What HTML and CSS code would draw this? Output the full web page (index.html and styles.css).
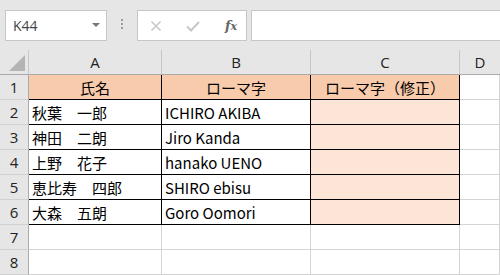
FILE: index.html
```html
<!DOCTYPE html>
<html lang="ja">
<head>
<meta charset="utf-8">
<link rel="stylesheet" href="styles.css">
</head>
<body>
<div class="toolbar">
  <div class="namebox"><span class="ref">K44</span><span class="caret"></span></div>
  <div class="dots"><i></i><i></i><i></i></div>
  <div class="fxbox">
    <svg class="ico" width="14" height="14" viewBox="0 0 14 14"><path d="M2.5 2.5 L11.5 11.5 M11.5 2.5 L2.5 11.5" stroke="#c8c8c8" stroke-width="1.6" fill="none"/></svg>
    <svg class="ico" width="16" height="14" viewBox="0 0 16 14"><path d="M2 7.5 L6 11.5 L14 3" stroke="#c8c8c8" stroke-width="2" fill="none"/></svg>
    <span class="fx">f<span class="x">x</span></span>
  </div>
  <div class="formula"></div>
</div>
<div class="sheet">
  <div class="corner"><span class="tri"></span></div>
  <div class="ch">A</div><div class="ch">B</div><div class="ch">C</div><div class="ch last">D</div>

  <div class="rh">1</div>
  <div class="c hd cen bl">氏名</div><div class="c hd cen bl">ローマ字</div><div class="c hd cen bl">ローマ字（修正）</div><div class="c"></div>

  <div class="rh">2</div>
  <div class="c bl">秋葉　一郎</div><div class="c bl">ICHIRO AKIBA</div><div class="c pk bl"></div><div class="c"></div>

  <div class="rh">3</div>
  <div class="c bl">神田　二朗</div><div class="c bl">Jiro Kanda</div><div class="c pk bl"></div><div class="c"></div>

  <div class="rh">4</div>
  <div class="c bl">上野　花子</div><div class="c bl">hanako UENO</div><div class="c pk bl"></div><div class="c"></div>

  <div class="rh">5</div>
  <div class="c bl">恵比寿　四郎</div><div class="c bl">SHIRO ebisu</div><div class="c pk bl"></div><div class="c"></div>

  <div class="rh">6</div>
  <div class="c bl">大森　五朗</div><div class="c bl">Goro Oomori</div><div class="c pk bl"></div><div class="c"></div>

  <div class="rh">7</div>
  <div class="c"></div><div class="c"></div><div class="c"></div><div class="c"></div>

  <div class="rh">8</div>
  <div class="c"></div><div class="c"></div><div class="c"></div><div class="c"></div>
</div>
</body>
</html>
```
FILE: styles.css
```css
html, body {
  margin: 0;
  padding: 0;
  background: #ffffff;
  width: 500px;
  height: 275px;
  overflow: hidden;
}
body {
  font-family: "Noto Sans CJK JP", "Noto Sans", sans-serif;
  color: #000;
}
.toolbar {
  height: 50px;
  background: #e6e6e6;
  display: flex;
  align-items: flex-start;
  padding-top: 10px;
  box-sizing: border-box;
}
.namebox {
  margin-left: 5px;
  width: 102px;
  height: 31px;
  box-sizing: border-box;
  background: #fff;
  border: 1px solid #c6c6c6;
  display: flex;
  align-items: center;
  justify-content: space-between;
  padding: 0 6px 0 7px;
}
.ref {
  font-family: "Open Sans", "Noto Sans", sans-serif;
  font-size: 14px;
  color: #444;
}
.caret {
  width: 0;
  height: 0;
  border-left: 4px solid transparent;
  border-right: 4px solid transparent;
  border-top: 4px solid #777;
  margin-bottom: 2px;
}
.dots {
  width: 30px;
  display: flex;
  flex-direction: column;
  align-items: center;
  gap: 2px;
  padding-top: 9px;
}
.dots i {
  display: block;
  width: 2px;
  height: 2px;
  background: #9a9a9a;
}
.fxbox {
  width: 110px;
  height: 31px;
  box-sizing: border-box;
  background: #fff;
  border: 1px solid #c6c6c6;
  display: flex;
  align-items: center;
  padding-left: 11px;
  gap: 22px;
}
.fx {
  font-family: "DejaVu Serif", "Liberation Serif", serif;
  font-style: italic;
  font-weight: bold;
  font-size: 13px;
  color: #666;
  margin-left: 2px;
}
.fx .x { font-size: 11px; }
.formula {
  margin-left: 4px;
  flex: 1;
  height: 31px;
  box-sizing: border-box;
  background: #fff;
  border: 1px solid #c6c6c6;
  border-right: none;
}
.sheet {
  display: grid;
  grid-template-columns: 29px 133px 149px 149px 1fr;
  grid-template-rows: 25px repeat(8, 25px);
  font-size: 15px;
}
.corner {
  background: #e6e6e6;
  border-right: 1px solid #c6c6c6;
  border-bottom: 1px solid #ababab;
  position: relative;
}
.tri {
  position: absolute;
  right: 3px;
  bottom: 3px;
  width: 0;
  height: 0;
  border-left: 16px solid transparent;
  border-bottom: 16px solid #b4b4b4;
}
.ch {
  background: #e6e6e6;
  border-right: 1px solid #c6c6c6;
  border-bottom: 1px solid #ababab;
  display: flex;
  align-items: center;
  justify-content: center;
  font-family: "Open Sans", "Noto Sans", sans-serif;
  font-size: 15px;
  color: #222;
}
.ch.last { border-right: none; }
.rh {
  background: #e6e6e6;
  border-right: 1px solid #ababab;
  border-bottom: 1px solid #d0d0d0;
  display: flex;
  align-items: center;
  justify-content: center;
  font-family: "Open Sans", "Noto Sans", sans-serif;
  font-size: 15px;
  color: #222;
}
.c {
  border-right: 1px solid #d4d4d4;
  border-bottom: 1px solid #d4d4d4;
  display: flex;
  align-items: center;
  padding-left: 3px;
  white-space: nowrap;
  overflow: hidden;
  line-height: 1;
}
.c.bl {
  border-right-color: #000;
  border-bottom-color: #000;
}
.hd { background: #f8cbad; }
.pk { background: #fce4d6; }
.cen { justify-content: center; padding-left: 0; }
```
